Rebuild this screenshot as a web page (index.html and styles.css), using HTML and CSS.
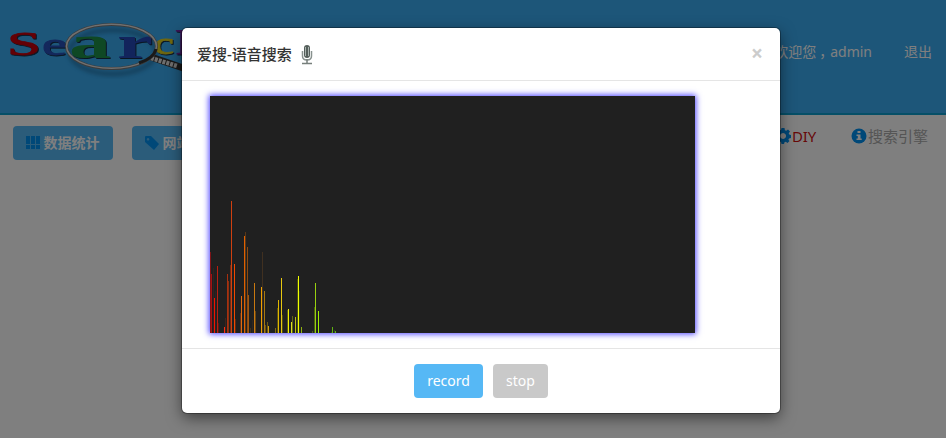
FILE: index.html
```html
<!DOCTYPE html>
<html lang="zh">
<head>
<meta charset="utf-8">
<title>爱搜</title>
<link rel="stylesheet" href="styles.css">
</head>
<body>
<header class="header">
  <svg class="logo" width="216" height="60" viewBox="0 0 216 60" aria-label="Search">
    <defs>
      <filter id="soft"><feGaussianBlur stdDeviation="2"/></filter>
    </defs>
    <ellipse cx="113" cy="28" rx="43" ry="22" fill="none" stroke="#164c70" stroke-width="4" opacity=".5" filter="url(#soft)"/>
    <g class="logo-text">
      <text x="7" y="31" font-size="33" textLength="34" lengthAdjust="spacingAndGlyphs" fill="#c8000c" stroke="#c8000c">S</text>
      <text x="42" y="31" font-size="32" textLength="25" lengthAdjust="spacingAndGlyphs" fill="#2850b8" stroke="#2850b8">e</text>
      <text x="154" y="30" font-size="32" textLength="20" lengthAdjust="spacingAndGlyphs" fill="#e0d020" stroke="#e0d020">c</text>
      <text x="176" y="30" font-size="33" textLength="32" lengthAdjust="spacingAndGlyphs" fill="#7828a8" stroke="#7828a8">h</text>
      <text class="lens" x="69" y="34" font-size="47" textLength="42" lengthAdjust="spacingAndGlyphs" fill="#1f9048">a</text>
      <text class="lens" x="117" y="34" font-size="47" textLength="36" lengthAdjust="spacingAndGlyphs" fill="#2448b8">r</text>
    </g>
    <path d="M151 33l41 14" stroke="#333" stroke-width="7"/>
    <path d="M151 34l26 8" stroke="#ddd" stroke-width="4.500" stroke-dasharray="3 1"/>
    <ellipse cx="111.500" cy="22.500" rx="45" ry="22" fill="none" stroke="#777" stroke-width="3"/>
    <ellipse cx="111.500" cy="22.300" rx="45" ry="22" fill="none" stroke="#e0e0e0" stroke-width="1.500"/>
    <path d="M156 25q-2 9-17 14" fill="none" stroke="#333" stroke-width="3"/>
  </svg>
  <nav class="account"><a>欢迎您<span class="comma">，</span>admin</a><a>退出</a></nav>
</header>
<main class="toolbar">
  <div class="group">
    <a class="btn nav-btn"><svg width="14" height="14" viewBox="0 0 14 14"><path d="M0 0h4v8H0zM5 0h4v8H5zM10 0h4v8h-4zM0 9h4v4H0zM5 9h4v4H5zM10 9h4v4h-4z"/></svg>数据统计</a>
    <a class="btn nav-btn"><svg width="14" height="14" viewBox="0 0 14 14"><path fill-rule="evenodd" d="M0 1q0-1 1-1h5l8 8-5 6-9-8zM3 2a1.300 1.300 0 1 0 .1 0z"/></svg>网站管理</a>
  </div>
  <div class="group links">
    <a class="diy"><svg width="16" height="16" viewBox="0 0 16 16"><path fill-rule="evenodd" d="M6.500 0h3l.4 2.200 1.300.6L13 1.500l2 2-1.300 1.800.5 1.300 1.800.4v3l-2 .4-.6 1.300L14.500 13l-2 2-1.800-1.200-1.200.5L9 16H6.500L6 14l-1.200-.5L3 14.700l-2-2L2.200 11l-.5-1.300L0 9V6.500L2 6l.5-1.200L1.300 3l2-2 1.800 1.200L6 2zM8 5a3 3 0 1 0 .1 0z"/></svg>DIY</a>
    <a class="engine"><svg width="16" height="16" viewBox="0 0 16 16"><circle cx="8" cy="8" r="7.500"/><path class="mark" d="M6.500 3h3v2h-3zM5.500 6.500h4v4h1.200V12H5.500v-1.500h1.300V8H5.500z"/></svg>搜索引擎</a>
  </div>
</main>
<div class="backdrop"></div>
<section class="modal">
  <div class="modal-header">
    <h4>爱搜-语音搜索</h4>
    <svg class="mic" width="12" height="20" viewBox="0 0 12 20"><rect x="3" y="0" width="6" height="13" rx="3" fill="#555f5b"/><path d="M4.500 2v9M7.500 2v9" stroke="#a9b3af"/><path d="M1.500 6v5q0 4 4.500 4t4.500-4V6" fill="none" stroke="#89928f" stroke-width="1.500"/><path d="M6 14v4M1 18.500h10" stroke="#77807c" stroke-width="1.500"/></svg>
    <span class="close">×</span>
  </div>
  <div class="modal-body">
    <svg class="spectrum" width="485" height="237" viewBox="0 0 485 237" shape-rendering="crispEdges"></svg>
  </div>
  <div class="modal-footer"><button class="btn record">record</button><button class="btn stop">stop</button></div>
</section>
<script src="spectrum.js"></script>
</body>
</html>
```
FILE: styles.css
```css
* { box-sizing: border-box; }
body { margin: 0; height: 438px; overflow: hidden; background: #fff; font: 15px "Noto Sans", "Noto Sans CJK SC", sans-serif; }
.header { height: 115px; padding: 24px 14px 0 0; display: flex; justify-content: space-between; background: #3aacf3; border-bottom: 2px solid #0c9fce; }
.logo { overflow: visible; }
.logo-text { font-family: "Liberation Serif", serif; stroke-width: .8px; filter: drop-shadow(1px 1px 0 #152d48); }
.lens { font-weight: bold; }
.account { display: flex; gap: 32px; color: #fff; font-size: 14px; line-height: 20px; padding-top: 18px; }
.comma { position: relative; left: 3px; }
.toolbar { display: flex; justify-content: space-between; padding: 11px 18px 0 13px; }
.group { display: flex; gap: 19px; }
.btn { height: 34px; border: 0; border-radius: 4px; color: #fff; font: 14px/20px "Noto Sans", "Noto Sans CJK SC", sans-serif; display: flex; align-items: center; justify-content: center; }
.nav-btn { width: 100px; gap: 4px; padding-right: 1px; background: #56b8f5; font-weight: bold; white-space: nowrap; }
.nav-btn svg, .links svg { fill: #0090f0; flex: none; }
.links { gap: 35px; line-height: 20px; }
.links a { display: flex; align-items: center; height: 20px; }
.links svg { margin-right: 1px; }
.links .mark { fill: #fff; }
.diy { color: #d01010; letter-spacing: -.2px; }
.engine { color: #aaa; }
.backdrop { position: absolute; inset: 0; background: rgba(0, 0, 0, .5); }
.modal { position: absolute; left: 182px; top: 28px; width: 598px; height: 385px; background: #fff; border-radius: 5px; box-shadow: 0 0 0 1px rgba(0, 0, 0, .3), 0 5px 15px rgba(0, 0, 0, .5); }
.modal-header { height: 53px; padding: 0 17px 0 15px; display: flex; align-items: center; border-bottom: 1px solid #e5e5e5; }
h4 { margin: -2px 0 0; color: #333; font-size: 15px; font-weight: 500; }
.mic { margin: 2px 0 0 9px; }
.close { margin: -2px 0 0 auto; color: #ccc; font: bold 21px "Noto Sans", sans-serif; }
.modal-body { height: 268px; padding: 15px 28px; border-bottom: 1px solid #e5e5e5; }
.spectrum { display: block; background: #202020; box-shadow: 0 0 6px 1px #4a40ff; }
.modal-footer { display: flex; justify-content: center; gap: 10px; padding: 15px 0 0; }
.record { width: 69px; background: #56b8f5; }
.stop { width: 55px; background: #c9c9c9; }
```
FILE: spectrum.js
```js
const bars = [
  [0, 81, '#7d1417'], [1, 59, '#a11212'], [3, 65, '#351f1f'], [4, 35, '#f01400'], [5, 42, '#2e2020'],
  [7, 67, '#b81e10'], [8, 10, '#5a1a14'], [14, 6, '#ff2a10'], [15, 15, '#40241c'], [17, 59, '#a83010'],
  [18, 52, '#8a3010'], [20, 68, '#702c14'], [21, 132, '#d04010'], [24, 69, '#f04800'], [25, 14, '#5a2a14'],
  [30, 20, '#5a3018'], [31, 37, '#e06a10'], [34, 97, '#e06000'], [35, 101, '#5a3818'], [37, 86, '#8e4a10'],
  [38, 38, '#a05810'], [40, 5, '#463018'], [42, 13, '#302820'], [44, 50, '#c87810'], [45, 22, '#6a4814'],
  [51, 46, '#f0a000'], [52, 81, '#403020'], [54, 42, '#a87810'], [55, 8, '#6a5010'], [57, 11, '#6a5818'],
  [58, 7, '#d0a010'], [65, 5, '#806a10'], [67, 25, '#5a5010'], [68, 33, '#e0b800'], [71, 55, '#e8c810'],
  [72, 18, '#504a10'], [77, 23, '#5a5810'], [78, 24, '#f0f000'], [81, 11, '#e0e020'], [82, 17, '#606810'],
  [85, 16, '#b8c010'], [87, 54, '#4a5010'], [88, 57, '#f0ff00'], [89, 42, '#303818'], [91, 6, '#90b010'],
  [102, 2, '#4a6018'], [104, 26, '#4a6010'], [105, 50, '#98d010'], [108, 22, '#a0f000'], [121, 1, '#305018'],
  [122, 6, '#60b010'], [124, 3, '#304a18'], [125, 2, '#60b010']
];
const chart = document.querySelector('.spectrum');
for (const [x, h, fill] of bars) {
  const r = document.createElementNS('http://www.w3.org/2000/svg', 'rect');
  const attrs = { x, y: 237 - h, width: 1, height: h, fill };
  for (const k in attrs) r.setAttribute(k, attrs[k]);
  chart.append(r);
}
```
